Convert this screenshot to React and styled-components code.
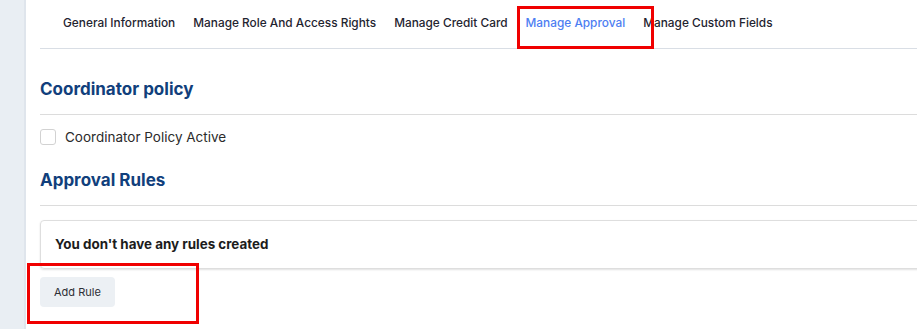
import React from "react";
import styled, { createGlobalStyle } from "styled-components";

const Global = createGlobalStyle`
  html, body { margin: 0; padding: 0; background: #fff; overflow: hidden; }
  body { font-family: Inter, "Noto Sans", Arial, sans-serif; color: #222; }
`;

const Page = styled.div`
  position: relative;
  display: flex;
  width: 917px;
  height: 329px;
  overflow: hidden;
`;

const Sidebar = styled.div`
  width: 24px;
  flex: none;
  background: #e9eef3;
  border-right: 2px solid #dfe5ec;
`;

const Main = styled.div`
  flex: 1;
  padding-left: 14px;
  margin-right: -20px;
`;

const TabBar = styled.div`
  display: flex;
  padding-left: 14px;
  border-bottom: 1px solid #d9dee5;
`;

const Tab = styled.div`
  padding: 14px 9px 14px;
  font-size: 11.85px;
  line-height: 18px;
  font-weight: 500;
  color: ${(p) => (p.$active ? "#4d7ef2" : "#1f2430")};
  border-bottom: 2px solid ${(p) => (p.$active ? "#4d7ef2" : "transparent")};
  white-space: nowrap;
`;

const SectionHeader = styled.h2`
  margin: 0;
  padding: ${(p) => p.$top}px 0 14px;
  border-bottom: 1px solid #dcdcdc;
  font-size: 17px;
  line-height: 22px;
  font-weight: 700;
  color: #113f7c;
`;

const CheckRow = styled.label`
  display: flex;
  align-items: center;
  gap: 9px;
  margin-top: 14px;
  height: 16px;
  font-size: 13.5px;
  color: #2b2b2b;
`;

const Box = styled.span`
  width: 14px;
  height: 14px;
  border: 1px solid #d2d2d2;
  border-radius: 3px;
  background: #fff;
`;

const Card = styled.div`
  margin-top: 14px;
  padding: 14px 14px;
  border: 1px solid #dedede;
  border-radius: 4px;
  box-shadow: 0 1px 2px rgba(0, 0, 0, 0.12);
  font-size: 13.4px;
  line-height: 19px;
  font-weight: 700;
  color: #1c1c1c;
`;

const Button = styled.button`
  margin-top: 8px;
  height: 30px;
  padding: 0 14px;
  border: none;
  border-radius: 4px;
  background: #ecf0f4;
  font-family: inherit;
  font-size: 11px;
  color: #2c2f36;
`;

const Highlight = styled.div`
  position: absolute;
  left: ${(p) => p.$x}px;
  top: ${(p) => p.$y}px;
  width: ${(p) => p.$w}px;
  height: ${(p) => p.$h}px;
  border: 3px solid #f00000;
  box-sizing: border-box;
  pointer-events: none;
`;

const tabs = [
  "General Information",
  "Manage Role And Access Rights",
  "Manage Credit Card",
  "Manage Approval",
  "Manage Custom Fields",
];

export default function App() {
  return (
    <>
      <Global />
      <Page>
        <Sidebar />
        <Main>
          <TabBar>
            {tabs.map((t) => (
              <Tab key={t} $active={t === "Manage Approval"}>
                {t}
              </Tab>
            ))}
          </TabBar>
          <SectionHeader $top={29}>Coordinator policy</SectionHeader>
          <CheckRow>
            <Box />
            Coordinator Policy Active
          </CheckRow>
          <SectionHeader $top={24}>Approval Rules</SectionHeader>
          <Card>You don't have any rules created</Card>
          <Button>Add Rule</Button>
        </Main>
        <Highlight $x={517} $y={6} $w={137} $h={43} />
        <Highlight $x={27} $y={263} $w={172} $h={61} />
      </Page>
    </>
  );
}
